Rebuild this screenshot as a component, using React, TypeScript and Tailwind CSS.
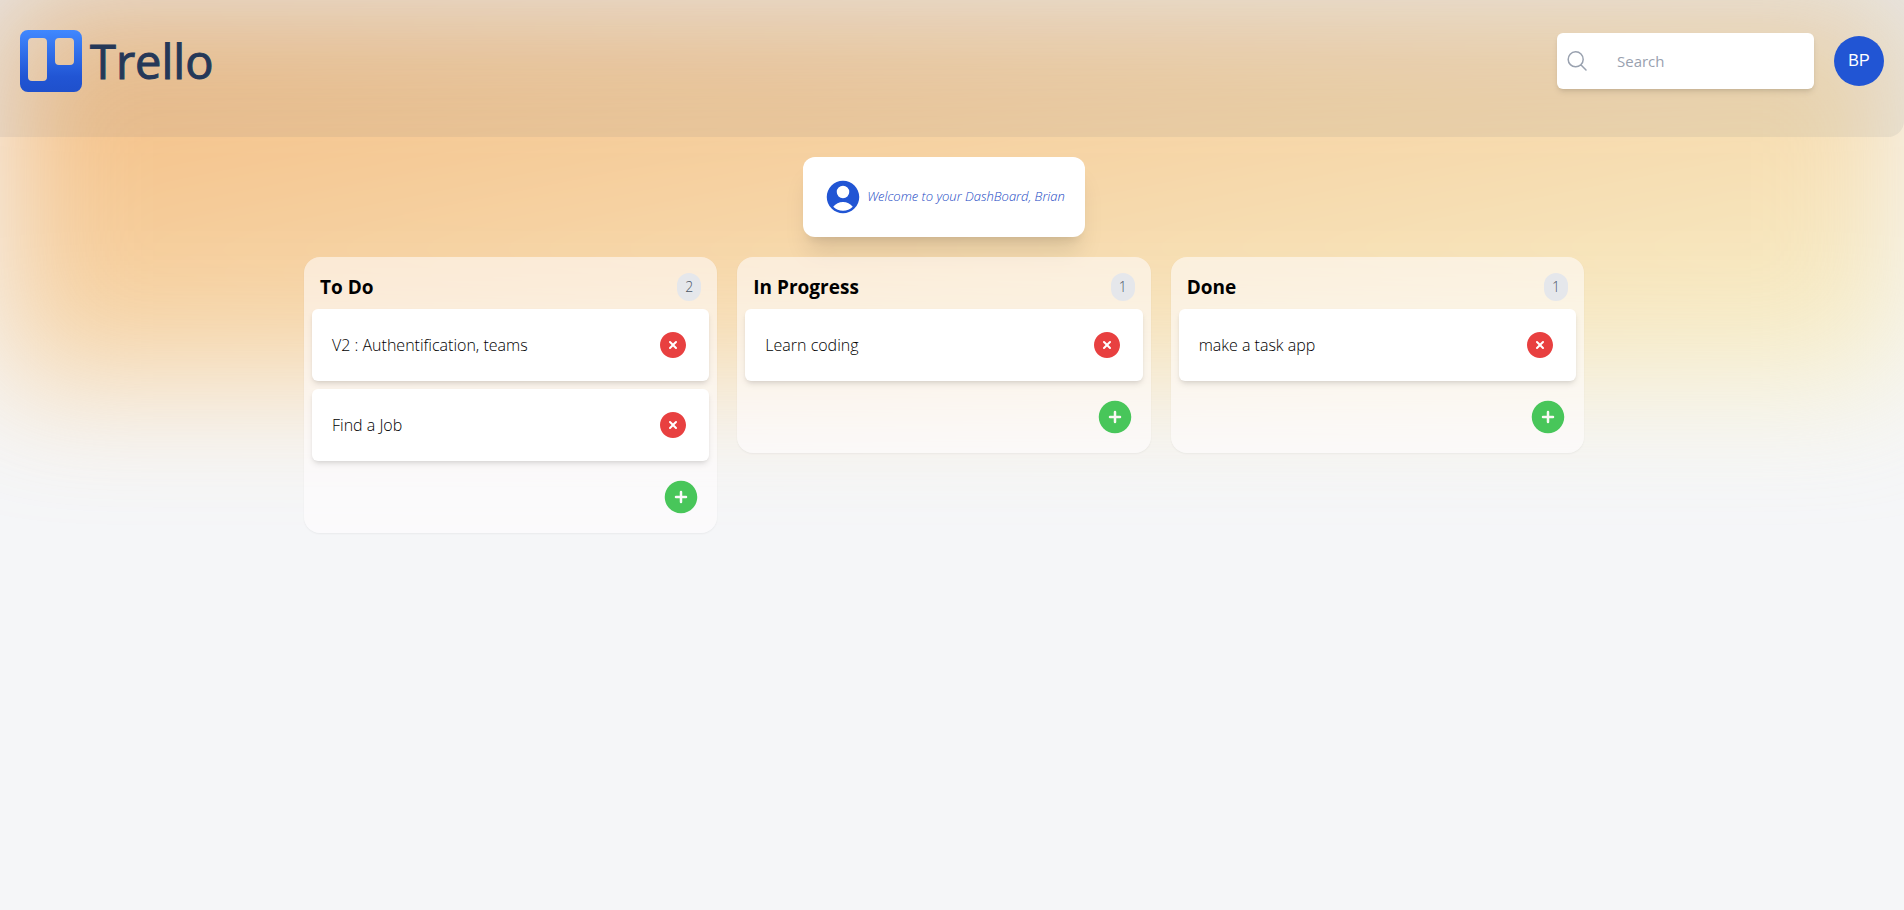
import { HiPlusCircle, HiUserCircle, HiXCircle } from "react-icons/hi2";

type Column = { title: string; tasks: string[] };

const columns: Column[] = [
  { title: "To Do", tasks: ["V2 : Authentification, teams", "Find a Job"] },
  { title: "In Progress", tasks: ["Learn coding"] },
  { title: "Done", tasks: ["make a task app"] },
];

function Logo() {
  return (
    <a href="#" className="flex items-center gap-2 text-[#253858]">
      <svg viewBox="0 0 62 62" className="size-[62px]" aria-hidden="true">
        <defs>
          <linearGradient id="mark" x1="0" y1="0" x2="0" y2="1">
            <stop offset="0" stopColor="#4088ff" />
            <stop offset="0.75" stopColor="#2155d4" />
            <stop offset="1" stopColor="#1f50cc" />
          </linearGradient>
        </defs>
        <path
          fill="url(#mark)"
          fillRule="evenodd"
          d="M8 0H54a8 8 0 0 1 8 8V54a8 8 0 0 1-8 8H8a8 8 0 0 1-8-8V8a8 8 0 0 1 8-8ZM12 8a4 4 0 0 0-4 4V47a4 4 0 0 0 4 4H23a4 4 0 0 0 4-4V12a4 4 0 0 0-4-4ZM39 8a4 4 0 0 0-4 4V31a4 4 0 0 0 4 4H50a4 4 0 0 0 4-4V12a4 4 0 0 0-4-4Z"
        />
      </svg>
      <span className="text-[47px] leading-none [-webkit-text-stroke:1px_#253858]">Trello</span>
    </a>
  );
}

function Header() {
  return (
    <header className="flex items-center justify-between rounded-br-2xl bg-gray-500/10 px-5 pt-[30px] pb-[45px]">
      <Logo />
      <div className="flex items-center gap-5">
        <form className="flex h-14 items-center rounded-md bg-white px-2 shadow-md">
          <svg viewBox="0 0 24 24" className="size-6 shrink-0 text-gray-400" fill="none" stroke="currentColor" strokeWidth="1.5" strokeLinecap="round" aria-hidden="true">
            <path d="m21 21-5.2-5.2m0 0A7.5 7.5 0 1 0 5.2 5.2a7.5 7.5 0 0 0 10.6 10.6Z" />
          </svg>
          <input
            type="text"
            aria-label="Search"
            placeholder="Search"
            className="ml-5 w-[197px] p-2 text-[15px] outline-none placeholder:text-gray-400"
          />
        </form>
        <button type="button" className="size-[50px] rounded-full bg-[#2155d4] font-['Liberation_Sans',sans-serif] text-base text-white">
          BP
        </button>
      </div>
    </header>
  );
}

function TaskCard({ task }: { task: string }) {
  return (
    <li className="flex items-center justify-between rounded-md bg-white p-5 shadow-md">
      <p className="font-light">{task}</p>
      <button type="button" aria-label={`Delete ${task}`} className="text-[#e84040]">
        <HiXCircle className="size-8" />
      </button>
    </li>
  );
}

function BoardColumn({ title, tasks }: Column) {
  return (
    <section className="rounded-2xl bg-[#fffdff]/55 p-2 shadow-xs">
      <div className="flex items-center justify-between p-2">
        <h2 className="text-[19px] leading-7 font-bold">{title}</h2>
        <span className="rounded-full bg-gray-200 px-2 py-1 text-sm font-light text-gray-600">{tasks.length}</span>
      </div>
      <ul className="space-y-2">
        {tasks.map((task) => (
          <TaskCard key={task} task={task} />
        ))}
      </ul>
      <div className="mt-2 flex justify-end p-2">
        <button type="button" aria-label={`Add task to ${title}`} className="text-[#48c65a]">
          <HiPlusCircle className="size-10" />
        </button>
      </div>
    </section>
  );
}

export default function App() {
  return (
    <div className="relative isolate min-h-screen overflow-hidden bg-[#f5f6f8] font-['Open_Sans','Noto_Sans',sans-serif] text-black">
      <div className="absolute top-0 left-0 -z-10 h-96 w-full bg-linear-to-br from-[#f29020] to-[#f7efb0] opacity-60 blur-3xl" />
      <Header />
      <main className="pr-4">
        <div className="flex justify-center py-5">
          <p className="flex h-20 items-center gap-1 rounded-xl bg-white p-5 text-[13px] font-light text-[#1a49c4] italic shadow-xl">
            <HiUserCircle className="size-10 text-[#2155d4]" />
            Welcome to your DashBoard, Brian
          </p>
        </div>
        <div className="mx-auto grid max-w-7xl grid-cols-1 items-start gap-5 md:grid-cols-3">
          {columns.map((column) => (
            <BoardColumn key={column.title} {...column} />
          ))}
        </div>
      </main>
    </div>
  );
}
